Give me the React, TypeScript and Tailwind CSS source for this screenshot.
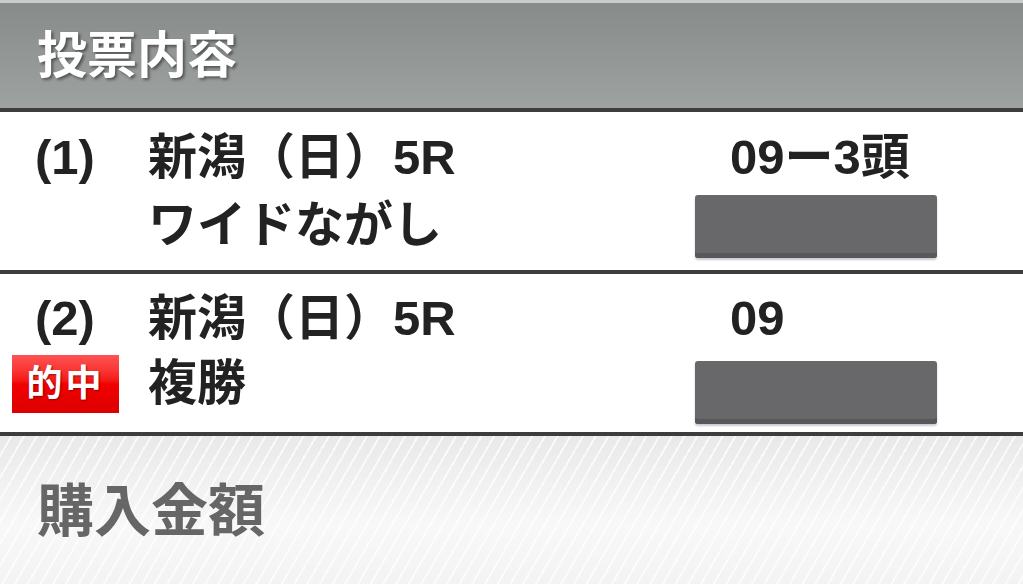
const font = "font-['Liberation_Sans','Noto_Sans_CJK_JP',sans-serif]";

const tickets = [
  { no: "(1)", race: "新潟（日）5R", type: "ワイドながし", horses: "09ー3頭", hit: false },
  { no: "(2)", race: "新潟（日）5R", type: "複勝", horses: "09", hit: true },
];

function Masked({ className }: { className: string }) {
  return (
    <div
      className={`h-[63px] w-[242px] rounded-[3px] bg-[#68686b] shadow-[inset_0_-5px_0_#58585c,0_2px_2px_rgba(40,40,80,0.25)] ${className}`}
    />
  );
}

export default function App() {
  return (
    <div className={`${font} h-[584px] w-full overflow-hidden bg-white font-bold text-[#222]`}>
      {/* header */}
      <div className="h-[3px] bg-[#c6cdcd]" />
      <div className="flex h-[105px] items-center bg-linear-to-b from-[#878b89] to-[#9ea3a1] pl-[37px]">
        <h1 className="text-[50px] leading-none text-white [text-shadow:2px_2px_3px_rgba(0,0,0,0.45)]">
          投票内容
        </h1>
      </div>
      <div className="h-[4px] bg-[#3d3d3d]" />

      {tickets.map((t, i) => (
        <div key={i}>
          <div
            className={`flex h-[158px] pl-[35px] text-[49px] ${
              t.hit ? "pt-3 leading-[65px]" : "pt-[11px] leading-[68px]"
            }`}
          >
            <div className="w-[113px] shrink-0">
              <div>{t.no}</div>
              {t.hit && (
                <div className="-ml-[23px] mt-[4px] flex h-[58px] w-[107px] items-center justify-center bg-linear-to-b from-[#ff5252] via-[#f20000] to-[#dc0000] text-[36px] leading-none tracking-[3px] text-white [text-shadow:1px_1px_2px_rgba(80,0,0,0.6)]">
                  的中
                </div>
              )}
            </div>
            <div className="flex-1">
              <div>{t.race}</div>
              <div>{t.type}</div>
            </div>
            <div className="w-[328px] shrink-0">
              <div className="pl-[35px]">{t.horses}</div>
              <Masked className={t.hit ? "mt-[10px]" : "mt-[4px]"} />
            </div>
          </div>
          <div className="h-[4px] bg-[#3d3d3d]" />
        </div>
      ))}

      {/* purchase amount */}
      <div className="h-[148px] bg-[image:repeating-linear-gradient(120deg,transparent_0px,transparent_9px,rgba(255,255,255,0.7)_9px,rgba(255,255,255,0.7)_11px),linear-gradient(to_bottom,#e9e9e9,#f8f8f8_60%,#f3f3f3)] pl-[37px] pt-[47px]">
        <h2 className="text-[57px] leading-none text-[#666]">購入金額</h2>
      </div>
    </div>
  );
}
